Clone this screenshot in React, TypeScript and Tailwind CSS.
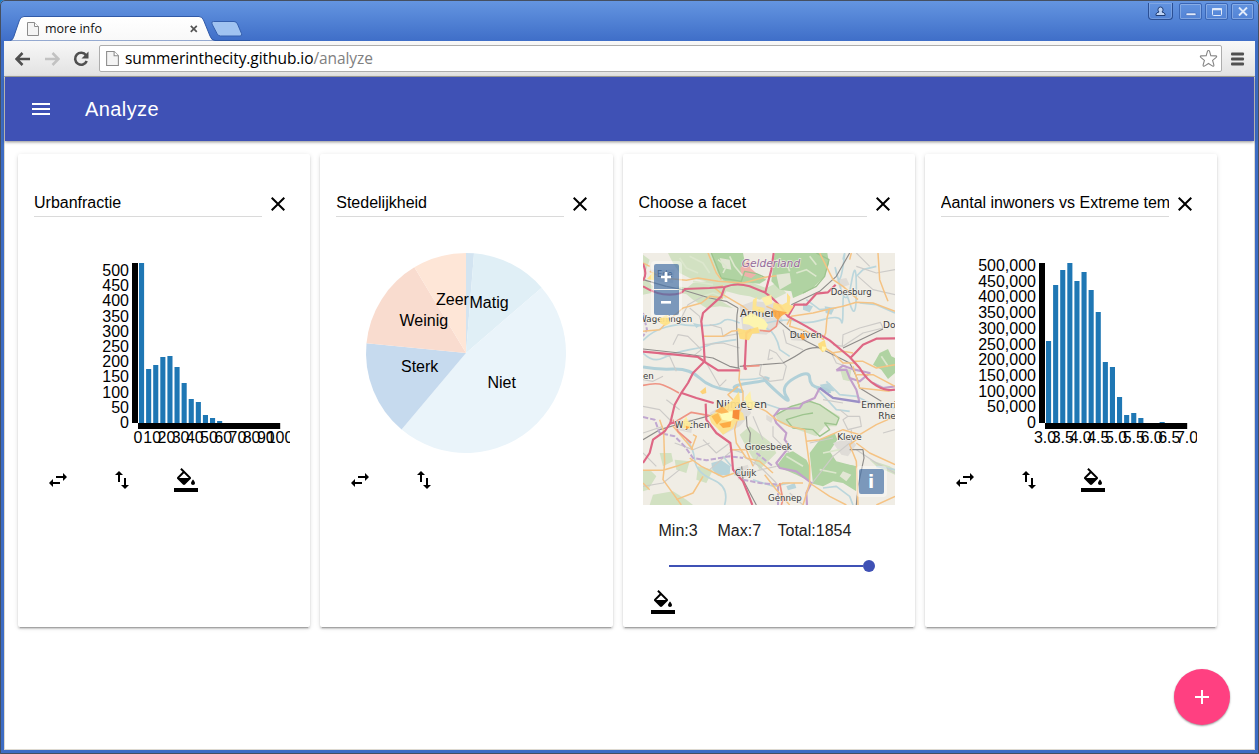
import React from "react";

const SWAP_H =
  "M6.99 11L3 15l3.99 4v-3H14v-2H6.99v-3zM21 9l-3.99-4v3H10v2h7.01v3L21 9z";
const SWAP_V =
  "M16 17.01V10h-2v7.01h-3L15 21l4-3.99h-3zM9 3L5 6.99h3V14h2V6.99h3L9 3z";
const FILL =
  "M16.56 8.94L7.62 0 6.21 1.41l2.38 2.38-5.15 5.15c-.59.59-.59 1.54 0 2.12l5.5 5.5c.29.29.68.44 1.06.44s.77-.15 1.06-.44l5.5-5.5c.59-.58.59-1.53 0-2.12zM5.21 10L10 5.21 14.79 10H5.21zM19 11.5s-2 2.17-2 3.5c0 1.1.9 2 2 2s2-.9 2-2c0-1.33-2-3.5-2-3.5zM0 20h24v4H0z";
const CLOSE =
  "M19 6.41L17.59 5 12 10.59 6.41 5 5 6.41 10.59 12 5 17.59 6.41 19 12 13.41 17.59 19 19 17.59 13.41 12z";
const MENU = "M3 18h18v-2H3v2zm0-5h18v-2H3v2zm0-7v2h18V6H3z";
const PLUS = "M19 13h-6v6h-2v-6H5v-2h6V5h2v6h6v2z";

function Icon({ d }: { d: string }) {
  return (
    <svg viewBox="0 0 24 24" className="h-6 w-6 shrink-0 fill-current">
      <path d={d} />
    </svg>
  );
}

function PageIcon({ className }: { className: string }) {
  return (
    <svg viewBox="0 0 12 14" className={className}>
      <path d="M.5.5h7l4 4v9H.5z" fill="#f4f4f4" stroke="#8c8c8c" />
      <path d="M7.5.5v4h4" fill="#fff" stroke="#8c8c8c" />
    </svg>
  );
}

function Card({ title, children }: { title: string; children: React.ReactNode }) {
  return (
    <section className="h-[473px] w-[292.25px] shrink-0 rounded-xs bg-white px-4 pt-[34px] shadow-[0_2px_2px_0_rgba(0,0,0,0.14),0_1px_5px_0_rgba(0,0,0,0.12),0_3px_1px_-2px_rgba(0,0,0,0.2)]">
      <div className="flex h-[29px]">
        <div className="w-[228px] overflow-hidden border-b border-[#dadada] text-base leading-[29px] whitespace-nowrap text-black">
          {title}
        </div>
        <button className="mt-1 ml-1 h-6 w-6">
          <Icon d={CLOSE} />
        </button>
      </div>
      {children}
    </section>
  );
}

function Actions({ fill = false }: { fill?: boolean }) {
  return (
    <div className="mt-[15px] flex gap-10 pl-3">
      <Icon d={SWAP_H} />
      <Icon d={SWAP_V} />
      {fill && <Icon d={FILL} />}
    </div>
  );
}

type ChartProps = {
  axis: number;
  bars: number[];
  yLabels: string[];
  yStep: number;
  xLabels: string[];
  xStep: number;
};

function BarChart({ axis, bars, yLabels, yStep, xLabels, xStep }: ChartProps) {
  return (
    <svg width="256" height="200" className="mt-9 block overflow-hidden text-base">
      {bars.map((h, i) => (
        <rect key={i} x={axis + 1 + i * 7.1} y={170 - h} width="5.1" height={h} fill="#1f77b4" />
      ))}
      <rect x={axis - 6} y="10" width="6" height="160" />
      <rect x={axis} y="170" width="142.2" height="6" />
      {yLabels.map((t, i) => (
        <text key={t} x={axis - 9} y={175 - i * yStep} textAnchor="end">
          {t}
        </text>
      ))}
      {xLabels.map((t, i) => (
        <text key={t} x={axis + i * xStep} y="190" textAnchor="middle">
          {t}
        </text>
      ))}
    </svg>
  );
}

const SLICES = [
  { from: 0, to: 4.6, color: "#d3e4f1" },
  { from: 4.6, to: 49.2, color: "#e0eff6" },
  { from: 49.2, to: 220.1, color: "#eaf4fa" },
  { from: 220.1, to: 275.6, color: "#c6daee" },
  { from: 275.6, to: 328.9, color: "#f9dccf" },
  { from: 328.9, to: 360, color: "#fee6d7" },
];

function slicePath(from: number, to: number) {
  const p = (a: number) => {
    const r = (a * Math.PI) / 180;
    return `${100 * Math.sin(r)} ${-100 * Math.cos(r)}`;
  };
  return `M0 0L${p(from)}A100 100 0 0 1 ${p(to)}Z`;
}

function Pie() {
  return (
    <svg width="256" height="200" className="mt-9 block text-base">
      <g transform="translate(130 100)">
        {SLICES.map((s) => (
          <path key={s.from} d={slicePath(s.from, s.to)} fill={s.color} />
        ))}
        <text x="-30" y="-48">Zeer</text>
        <text x="3.5" y="-45">Matig</text>
        <text x="-66.5" y="-27">Weinig</text>
        <text x="-65" y="19">Sterk</text>
        <text x="21.5" y="35">Niet</text>
      </g>
    </svg>
  );
}

const PALE_FORESTS = [
  "M75 0H215L238 80 330 90 370 105 400 125 350 140 320 130 290 125 250 115 235 145 270 165 230 160 190 165 150 140 120 115 150 90 190 85 140 75 110 60 90 30Z",
  "M0 70L30 100 25 120 0 125ZM100 100L180 110 170 130 110 120Z",
  "M395 485L440 460 500 440 530 455 590 490 580 520 545 520 520 550 450 525 410 510Z",
  "M290 545L320 520 385 570 400 600 350 650 320 600Z",
  "M0 650L25 655 40 670 15 710 0 715ZM50 600L85 600 90 625 60 640ZM95 620L140 625 130 660 100 650ZM165 640L210 650 190 690 160 680Z",
  "M30 725L90 715 130 740 150 756H20Z",
  "M680 620L740 640 756 650V665L700 640ZM590 345L625 350 620 385 600 380Z",
  "M0 5L20 20 10 50 0 40ZM340 120L400 90 430 120 390 140Z",
];

const FORESTS = [
  "M205 0H300L310 50 345 65 370 80 350 92 300 88 280 95 240 82 225 60Z",
  "M395 0H553L558 30 545 70 510 105 485 120 450 135 445 115 410 110 385 85Z",
  "M710 300L735 288 745 310 756 315V360L735 378 715 350 690 335Z",
  "M430 600L450 595 490 620 500 640V685L460 665 400 640Z",
  "M500 600L530 560 575 540 583 560 560 595 580 625 620 635 640 640V715L600 690 570 685 540 700 510 692Z",
  "M585 630L640 640 635 660 610 665Z",
];

const FOREST_DETAIL = [
  "M110 15L130 45 165 60M140 10L180 30 200 60M150 85L210 95M225 20L250 40 240 60M260 10L275 40 300 70M400 20L430 30 440 55M460 60L490 50 520 70M500 10L520 35M180 130L210 120 250 135",
  "M430 610L480 640M540 600L590 590M530 650L580 660M715 310L735 340",
];

const FOREST_EDGES = [
  "M205 0L235 75 295 85 305 55 340 62 370 75M520 0L558 20 545 70 520 100 480 120",
  "M400 485L445 460 500 445 530 455 588 495 580 515 545 510 560 530 530 550 510 530 450 525 430 500 480 485 510 480",
];

const RIVERS = [
  "M0 262Q30 232 70 222T120 215 180 218 240 205 290 210M370 225Q400 240 410 290L440 310",
  "M0 300Q30 330 60 315T140 290 200 275 280 260",
  "M370 210Q430 195 460 205T540 200 595 205 600 155 620 150 640 110 625 90 590 95 580 60 600 40 600 20M640 70L660 50 700 40",
  "M490 140L530 170 580 165M650 150L700 155 756 180",
  "M290 380Q330 380 350 375L380 375",
  "M550 385L590 425 640 430 680 450 756 465M520 405L580 470 620 475",
  "M300 445L360 450 420 470M130 560Q150 580 155 620T210 680 245 756",
  "M240 610L265 640M330 680L390 700 440 690M540 705L580 700 620 730 630 756M700 640L756 650",
];

const BIG_RIVERS = [
  "M0 342Q40 350 90 348T170 375 260 412 285 410 320 390 370 375 400 415 430 430 455 375 500 375 530 405 560 420",
];

const LAKES =
  "M205 630L235 622 262 640 260 665 225 668 208 650ZM270 650L295 645 290 665 275 668ZM480 150L510 160 500 178 480 170ZM545 160L575 165 565 185 548 180ZM530 395L560 390 575 415 545 415ZM430 700L455 690 460 705 435 712ZM150 210L175 215 160 225Z";

const GREY_ROADS = [
  "M115 195L135 155 180 130M140 165L170 190 175 210M90 275L105 245 135 250 175 290 150 310M200 215L235 225 240 250 300 240M180 275L240 270 290 285",
  "M0 380L30 385 60 370M100 355L80 310 40 300M190 330L230 400 250 380M355 335L350 365 380 385 420 380 430 340 400 300 380 290 375 320 390 315M420 230L430 270 480 290",
  "M598 278L600 245 650 225 712 208 720 225 660 240 600 280 570 275M565 300L580 330 610 340M640 40L700 60 756 50M645 70L690 110 756 125M640 0L680 40",
  "M0 460L50 470 90 510M70 440L110 470M180 560L220 600 260 570M60 520L0 540M95 570L150 590 200 570M200 650L270 590 300 600",
  "M615 490L650 490 655 520 615 530 600 500ZM590 470L615 490M625 530V570M500 570L570 555M500 700L570 610 620 570M390 520L390 550 440 600M330 490L360 560M350 600L330 640",
  "M300 610L350 640 400 690M310 660L400 640M0 700L60 690 110 650M640 590L700 630 756 660M720 540L756 530M440 720L480 756M0 600L40 640M540 440L600 450",
];

const THIN_RAILS = [
  "M70 100L110 108 200 135 250 145 285 165M285 165Q278 200 283 250L286 345M0 288L110 300 210 315 260 340 290 346",
  "M408 205L450 240 490 265 560 300 620 330 640 370 650 405 715 445M445 155L530 115 580 70 620 0M0 560L50 530 120 510 200 488 250 480",
  "M290 340L420 330Q460 310 480 295T540 285M600 285L720 228M310 490L312 520 322 540 320 570M296 640L300 680 340 756M620 590L660 590 663 615 645 700 640 756M0 80L70 100",
];

const ORANGE_ROADS = [
  "M20 55L60 75 130 82 165 75 225 85 300 90 370 72 400 68M240 98L215 105 240 125 300 160 330 185M0 235L50 230 85 195 120 165 175 150 200 130 240 135",
  "M178 250L240 250 265 235 290 232M195 0L220 60 235 80M370 160L430 185 445 195M432 215L445 190 510 180 560 168 600 160 640 148 690 150 756 175M445 195L440 220 490 235 540 258",
  "M530 0L570 80 600 100 645 140M705 0L710 80 725 120 735 145M560 165L552 195 548 240 540 260M545 285L570 300 600 330 640 330M565 300L600 295 630 300M635 325L660 325 700 345 756 335M630 340L650 405 740 415",
  "M290 350L288 380 300 420 300 450 285 490 275 530 280 570 310 615 350 625 390 660M285 400L255 425 270 440M50 500L62 535 65 630 60 680 115 756M0 652L60 652 100 640 150 622M0 690L20 710",
  "M140 615L175 640 240 672 275 660M145 590L160 550 150 545M90 520L150 590M260 590L310 590 330 640M320 450L370 475 400 500 440 520 485 530 500 640 500 690 560 730 610 756",
  "M490 565L530 560 600 530 650 545 700 515 756 490M640 560L620 575 630 600 640 625 645 756M640 570L680 600 756 635M500 690L480 756M400 700L420 690 480 690M756 730L700 756M365 665L400 710 440 756",
  "M640 365L690 365 756 400M620 20L625 0M20 40L0 30M180 670L150 720 100 740",
];

const SALMON_ROADS = [
  "M0 397Q40 388 60 396T108 420M100 505L145 478 200 488M90 500L105 535 145 570M350 232L380 235 400 220 405 200M410 690L420 740 415 756M310 340L350 338",
];

const MOTORWAYS = [
  "M0 32Q14 65 0 82M0 100Q40 125 80 125T125 108L200 105 245 102Q280 88 320 100L365 118Q400 140 435 190L490 220 560 262 620 312 650 345Q670 380 700 398T756 410",
  "M245 102L235 130 180 180 175 205 182 270 185 325",
  "M0 296L90 304 165 312 190 330 225 352 290 352M310 350L302 335",
  "M185 325L150 360 135 390 116 418 95 455 82 510 65 535 30 560 20 600 0 630",
  "M116 420L160 435 212 450M188 452L190 500 220 540 262 570 266 600 270 650 300 685 318 730 328 756",
  "M392 0L385 50 367 118M435 190L455 155 490 155 520 122 555 118 578 95",
  "M622 315L660 275 700 257 756 256",
  "M80 512L95 508M305 350L310 240 325 230",
];

const BORDERS = [
  "M580 352L600 338 635 350 680 360 650 385 620 375 610 350 580 352M620 375L640 410 650 450",
  "M530 405L515 435 480 450 470 465 410 468 392 490 400 510 430 540 425 560 440 580 400 630 410 645 460 655 505 690 490 720 492 756",
  "M756 400L720 405 690 390",
];

const BORDER_DASHED = [
  "M0 492L35 500 50 540 95 550 125 580 150 615 190 622 260 610 300 615M340 600L390 640M300 680L350 690 405 695 405 756",
  "M0 180L12 230 0 250",
];

const HEAT: [string, string][] = [
  ["M300 195L325 180 345 190 362 198 375 215 368 230 340 228 318 215 300 212Z", "#fff6ac"],
  ["M283 225L308 232 345 222 350 240 328 242 318 262 290 257Z", "#fedc7b"],
  ["M355 135L385 125 388 152 368 158Z", "#fff0a6"],
  ["M330 140L342 132 340 160 365 165 362 180 328 172Z", "#ffe48b"],
  ["M392 148L400 150 418 155 432 148 432 120 442 132 440 155 452 160 435 185 410 175 390 165Z", "#fee084"],
  ["M388 170L408 173 432 178 415 190 405 202 392 190Z", "#fda946"],
  ["M470 248L480 240 487 255 478 262Z", "#fea035"],
  ["M525 272L545 260 552 290 538 298 528 285Z", "#fedd78"],
  ["M537 280L550 282 545 295 536 292Z", "#fff6b0"],
  ["M50 195L72 185 82 210 68 218 50 210Z", "#ffe386"],
  ["M28 60L35 55 33 82 12 78Z", "#ffe386"],
  ["M171 416L188 402 190 420 178 424Z", "#fed06f"],
  ["M198 490L240 465 270 440 288 415 292 450 275 465 300 480 305 500 280 505 270 525 240 545 222 525 205 510Z", "#fee189"],
  ["M228 478L268 475 275 495 262 505 238 500Z", "#fffdb8"],
  ["M205 490L225 480 235 500 222 515Z", "#fdb94e"],
  ["M215 475L238 460 258 478 235 482Z", "#fdb352"],
  ["M270 472L290 470 288 500 268 495Z", "#f68534"],
  ["M228 512L265 505 262 522 240 525Z", "#fda63e"],
  ["M305 435L322 415 325 440 338 450 330 470 312 460Z", "#fff0a4"],
  ["M120 505L130 490 135 505 145 510 140 528 118 525Z", "#feed9b"],
  ["M128 518L140 522 130 530Z", "#fda340"],
];

type Label = { x: number; y: number; t: string; size?: number };
const PLACES: Label[] = [
  { x: 291, y: 191, t: "Arnhem", size: 31 },
  { x: 219, y: 464, t: "Nijmegen", size: 32 },
  { x: -14, y: 208, t: "Wageningen", size: 26 },
  { x: 42, y: 72, t: "Ede", size: 25 },
  { x: 563, y: 126, t: "Doesburg", size: 25.5 },
  { x: 440, y: 256, t: "Duiven", size: 27.5 },
  { x: 720, y: 225, t: "Doetinchem", size: 27 },
  { x: 0, y: 379, t: "en", size: 26 },
  { x: 95, y: 524, t: "Wijchen", size: 26.5 },
  { x: 305, y: 592, t: "Groesbeek", size: 26.5 },
  { x: 275, y: 669, t: "Cuijk", size: 26.5 },
  { x: 375, y: 743, t: "Gennep", size: 26 },
  { x: 583, y: 562, t: "Kleve", size: 26.5 },
  { x: 655, y: 466, t: "Emmerich", size: 27 },
  { x: 706, y: 498, t: "Rhein", size: 27 },
];

function Strokes({ paths, color, width, dash }: { paths: string[]; color: string; width: number; dash?: string }) {
  return (
    <g fill="none" stroke={color} strokeWidth={width} strokeLinejoin="round" strokeDasharray={dash}>
      {paths.map((d) => (
        <path key={d} d={d} />
      ))}
    </g>
  );
}

function MapView() {
  return (
    <div className="relative mt-9 ml-1 h-[252px] w-[252px] overflow-hidden bg-[#f0ede5]">
      <svg viewBox="0 0 756 756" className="block h-full w-full">
        <g fill="#cfe0bf" opacity="0.9">
          {PALE_FORESTS.map((d) => (
            <path key={d} d={d} />
          ))}
        </g>
        <g fill="#b0d3a2">
          {FORESTS.map((d) => (
            <path key={d} d={d} />
          ))}
        </g>
        <path d="M400 65L440 60 445 90 410 110ZM230 15L260 20 265 50 240 45ZM600 655L625 665 610 685 590 670Z" fill="#e2e6d4" />
        <path d="M292 45L318 18 322 45 342 62 325 76 296 66Z" fill="#efb1aa" />
        <g fill="#dfdcd7">
          <path d="M290 160L330 145 400 150 420 205 370 245 300 240ZM200 480L250 450 310 450 325 480 290 520 240 545ZM570 570L620 555 640 575 615 610 595 605ZM95 500L150 500 145 540 100 530ZM580 80L610 75 620 95 590 105Z" />
          <path d="M20 50L95 50 90 90 40 85ZM280 645L315 635 320 670 285 680ZM370 485L390 495 385 510 370 500ZM440 240L500 245 490 265 445 262Z" />
        </g>
        <path d={LAKES} fill="#b8d4da" />
        <Strokes paths={FOREST_DETAIL} color="#dce7cd" width={5} />
        <Strokes paths={FOREST_EDGES} color="#9dc48e" width={4} />
        <Strokes paths={RIVERS} color="#bbd6dc" width={5} />
        <Strokes paths={BIG_RIVERS} color="#b1d0d8" width={9} />
        <Strokes paths={GREY_ROADS} color="#cdcbc8" width={3.5} />
        <Strokes paths={THIN_RAILS} color="#8e8c8a" width={3.5} />
        <Strokes paths={BORDER_DASHED} color="#c0a8d0" width={6} dash="16 6" />
        <Strokes paths={BORDERS} color="#c3a0cb" width={6.5} />
        <path d="M530 405L570 435 650 447" fill="none" stroke="#9a8fc6" strokeWidth="7" />
        <Strokes paths={ORANGE_ROADS} color="#f5c384" width={4.5} />
        <Strokes paths={SALMON_ROADS} color="#ee9484" width={5} />
        <Strokes paths={MOTORWAYS} color="#de6784" width={6.5} />
        <g fontFamily="DejaVu Sans, sans-serif" fill="#3b3b3b" stroke="#f5f3ec" strokeOpacity="0.8" strokeWidth="4" paintOrder="stroke">
          {PLACES.map((p) => (
            <text key={p.t} x={p.x} y={p.y} fontSize={p.size}>
              {p.t}
            </text>
          ))}
          <text x="296" y="42" fontSize="32" fontStyle="italic" fill="#956a9c">
            Gelderland
          </text>
        </g>
        {HEAT.map(([d, c]) => (
          <path key={d} d={d} fill={c} opacity="0.93" />
        ))}
      </svg>
      <div className="absolute top-2 left-2 flex flex-col gap-px rounded bg-white/40 p-[3px] text-center font-bold text-white">
        <button className="flex h-[25px] w-[25px] items-center justify-center rounded-t-xs bg-[#003c88]/50">
          <svg width="10" height="10"><path d="M3.7 0h2.6v3.7H10v2.6H6.300V10H3.700V6.300H0V3.700h3.700z" fill="#fff" /></svg>
        </button>
        <button className="flex h-[25px] w-[25px] items-center justify-center rounded-b-xs bg-[#003c88]/50">
          <svg width="10" height="3"><rect width="10" height="2.6" fill="#fff" /></svg>
        </button>
      </div>
      <div className="absolute right-2 bottom-2 rounded bg-white/40 p-[3px]">
        <button className="block h-[25px] w-[25px] rounded-xs bg-[#003c88]/50 text-center font-['DejaVu_Sans',sans-serif] text-lg leading-[24px] font-bold text-white">
          i
        </button>
      </div>
    </div>
  );
}

function WindowButton({ children }: { children: React.ReactNode }) {
  return (
    <div className="flex h-[17px] w-[23px] items-center justify-center rounded-xs border border-[#3a66b5] shadow-[inset_0_0_0_1px_rgba(255,255,255,0.25)]">
      {children}
    </div>
  );
}

function TitleBar() {
  return (
    <div className="flex h-[41px] shrink-0 justify-between bg-linear-to-b from-[#6596e1] to-[#3f6ec8]">
      <div className="relative mt-4 ml-[10px] h-[25px] w-[240px]">
        <svg width="240" height="25" className="absolute inset-0">
          <defs>
            <linearGradient id="tab" x2="0" y2="1">
              <stop stopColor="#fff" />
              <stop offset="1" stopColor="#f8f8f8" />
            </linearGradient>
          </defs>
          <path
            d="M-6 25V24.5H0Q2.500 24.500 3.500 21.500L9.500 4Q11 .5 14 .5H189Q192 .5 193.500 4L200 20Q201.500 24.500 205 24.500H240V25Z"
            fill="url(#tab)"
            stroke="#315aa8"
          />
          <path
            d="M203.500 5.500H224Q226.500 5.500 227.500 8L231.500 17.500Q232.500 20 230 20H210.500Q208 20 207 17.500L202 8Q201 5.500 203.500 5.500Z"
            fill="#a0c3f1"
            stroke="#345fae"
          />
        </svg>
        <div className="relative flex h-[25px] items-center pl-[17px]">
          <PageIcon className="h-[14px] w-3" />
          <span className="ml-[6px] w-[145px] font-['Open_Sans',sans-serif] text-[12.5px] leading-[25px] text-[#111]">
            more info
          </span>
          <svg width="8" height="8" className="mt-px">
            <path d="M.8.8l6 6M6.800.8l-6 6" stroke="#555" strokeWidth="1.700" />
          </svg>
        </div>
      </div>
      <div className="mt-[3px] mr-[5px] flex gap-[3px]">
        <div className="mr-[3px] flex h-[17px] w-[25px] items-center justify-center rounded-b border border-t-0 border-[#2b4f94] shadow-[inset_0_0_0_1px_rgba(255,255,255,0.18)]">
          <svg width="11" height="11" viewBox="0 0 11 11" className="shrink-0">
            <path d="M1 9.500V8Q1.500 6.500 4 6Q2.800 5 3 3.200Q3.200 1 5.500 1T8 3.200Q8.200 5 7 6Q9.500 6.500 10 8V9.500Z" fill="#bed3f4" stroke="#213e75" />
          </svg>
        </div>
        <WindowButton>
          <svg width="12" height="10"><rect x="1" y="6" width="10" height="2.500" rx="1" fill="#e1eafa" stroke="#345fae" strokeWidth=".5" /></svg>
        </WindowButton>
        <WindowButton>
          <svg width="12" height="10"><rect x="1.500" y="1.500" width="9" height="7" rx="1" fill="none" stroke="#e1eafa" /><path d="M1 2.200h10" stroke="#e1eafa" strokeWidth="2" /></svg>
        </WindowButton>
        <WindowButton>
          <svg width="10" height="9"><path d="M1 .5l8 8M9 .5l-8 8" stroke="#e1eafa" strokeWidth="1.900" /></svg>
        </WindowButton>
      </div>
    </div>
  );
}

function Toolbar() {
  return (
    <div className="mx-1 flex h-9 shrink-0 items-center border-b border-[#a5a59d] bg-linear-to-b from-[#f8f8f8] to-[#e2e2e2]">
      <div className="flex w-[95px] shrink-0 items-center pl-[11px]">
        <svg width="16" height="14" className="mr-[13px]">
          <path d="M7.500 1L1.500 7l6 6M2 7h13" fill="none" stroke="#4f4f4f" strokeWidth="2.600" />
        </svg>
        <svg width="16" height="14" className="mr-[13px]">
          <path d="M8.500 1l6 6-6 6M14 7H1" fill="none" stroke="#c2c2c2" strokeWidth="2.600" />
        </svg>
        <svg width="17" height="16">
          <path d="M13 4.200A6 6 0 1 0 13.700 10" fill="none" stroke="#4f4f4f" strokeWidth="2.600" />
          <path d="M15.500 .5V7.500H8.500Z" fill="#4f4f4f" />
        </svg>
      </div>
      <div className="flex h-[27px] flex-1 items-center rounded-xs border border-[#adadad] bg-white pl-[6px]">
        <PageIcon className="h-[15px] w-[13px]" />
        <span className="ml-[6px] font-['Open_Sans',sans-serif] text-[15.5px] leading-[25px] tracking-[-0.07px] text-black">
          summerinthecity.github.io<span className="text-[#808080]">/analyze</span>
        </span>
        <svg width="19" height="19" viewBox="0 0 19 19" className="mr-[3px] ml-auto">
          <path
            d="M9.500 1.500Q10.300 1.500 10.500 2.200L11.800 6.600 16.800 6.900Q18.300 7.200 17.200 8.300L13.600 11.400 14.900 16Q15 17.700 13.600 17.100L9.500 14.500 5.400 17.100Q4 17.700 4.100 16L5.400 11.400 1.800 8.300Q.7 7.200 2.200 6.900L7.200 6.600 8.500 2.200Q8.700 1.500 9.500 1.500Z"
            fill="#fff"
            stroke="#858585"
            strokeWidth="1.100"
          />
        </svg>
      </div>
      <svg width="14" height="14" className="mr-[10px] ml-[9px]">
        <g fill="#505050">
          <rect width="13" height="3" y=".5" rx="1" />
          <rect width="13" height="3" y="5.500" rx="1" />
          <rect width="13" height="3" y="10.500" rx="1" />
        </g>
      </svg>
    </div>
  );
}

export default function App() {
  return (
    <div className="h-[754px] w-[1259px] overflow-hidden bg-[#1a80c4] font-['Liberation_Sans',Arial,sans-serif]">
      <div className="relative flex h-full flex-col overflow-hidden rounded-t-[5px] bg-[#3d6cc4]">
        <TitleBar />
        <Toolbar />
        <div className="mx-1 mb-1 flex min-h-0 flex-1 flex-col border-x border-b border-[#ddd9d0] bg-white">
          <header className="z-10 flex h-16 shrink-0 items-center gap-8 bg-[#3f51b5] pl-6 text-white shadow-[0_1px_3px_rgba(0,0,0,0.45)]">
            <Icon d={MENU} />
            <h1 className="text-xl tracking-[0.02em]">Analyze</h1>
          </header>
          <main className="flex gap-[10px] pt-[13px] pl-[13px]">
            <Card title="Urbanfractie">
              <BarChart
                axis={104}
                bars={[160, 54, 58, 66, 67, 56, 40, 24, 21, 8, 5, 2]}
                yLabels={["0", "50", "100", "150", "200", "250", "300", "350", "400", "450", "500"]}
                yStep={15.2}
                xLabels={["0", "10", "20", "30", "40", "50", "60", "70", "80", "90", "100"]}
                xStep={14.2}
              />
              <Actions fill />
            </Card>
            <Card title="Stedelijkheid">
              <Pie />
              <Actions />
            </Card>
            <Card title="Choose a facet">
              <MapView />
              <div className="flex pt-4 pl-[20px] text-base leading-5 text-[#212121]">
                <span className="w-[59px]">Min:3</span>
                <span className="w-[60px]">Max:7</span>
                <span>Total:1854</span>
              </div>
              <div className="mt-[19px] ml-[30px] flex h-3 items-center">
                <div className="h-[2px] w-[194px] bg-[#3f51b5]" />
                <div className="h-3 w-3 rounded-full bg-[#3f51b5]" />
              </div>
              <div className="mt-[18px] ml-3">
                <Icon d={FILL} />
              </div>
            </Card>
            <Card title="Aantal inwoners vs Extreme temperatuur">
              <BarChart
                axis={104}
                bars={[82, 138, 153, 160, 142, 151, 133, 111, 61, 56, 26, 8, 10, 5, 0, 0, 1]}
                yLabels={["0", "50,000", "100,000", "150,000", "200,000", "250,000", "300,000", "350,000", "400,000", "450,000", "500,000"]}
                yStep={15.7}
                xLabels={["3.0", "3.5", "4.0", "4.5", "5.0", "5.5", "6.0", "6.5", "7.0"]}
                xStep={17.75}
              />
              <Actions fill />
            </Card>
          </main>
        </div>
        <button className="absolute right-[29px] bottom-[29px] flex h-14 w-14 items-center justify-center rounded-full bg-[#ff4081] text-white shadow-[0_1px_2px_rgba(0,0,0,0.4)]">
          <Icon d={PLUS} />
        </button>
        <div className="pointer-events-none absolute inset-0 rounded-t-[5px] border border-[#454f60]" />
      </div>
    </div>
  );
}
